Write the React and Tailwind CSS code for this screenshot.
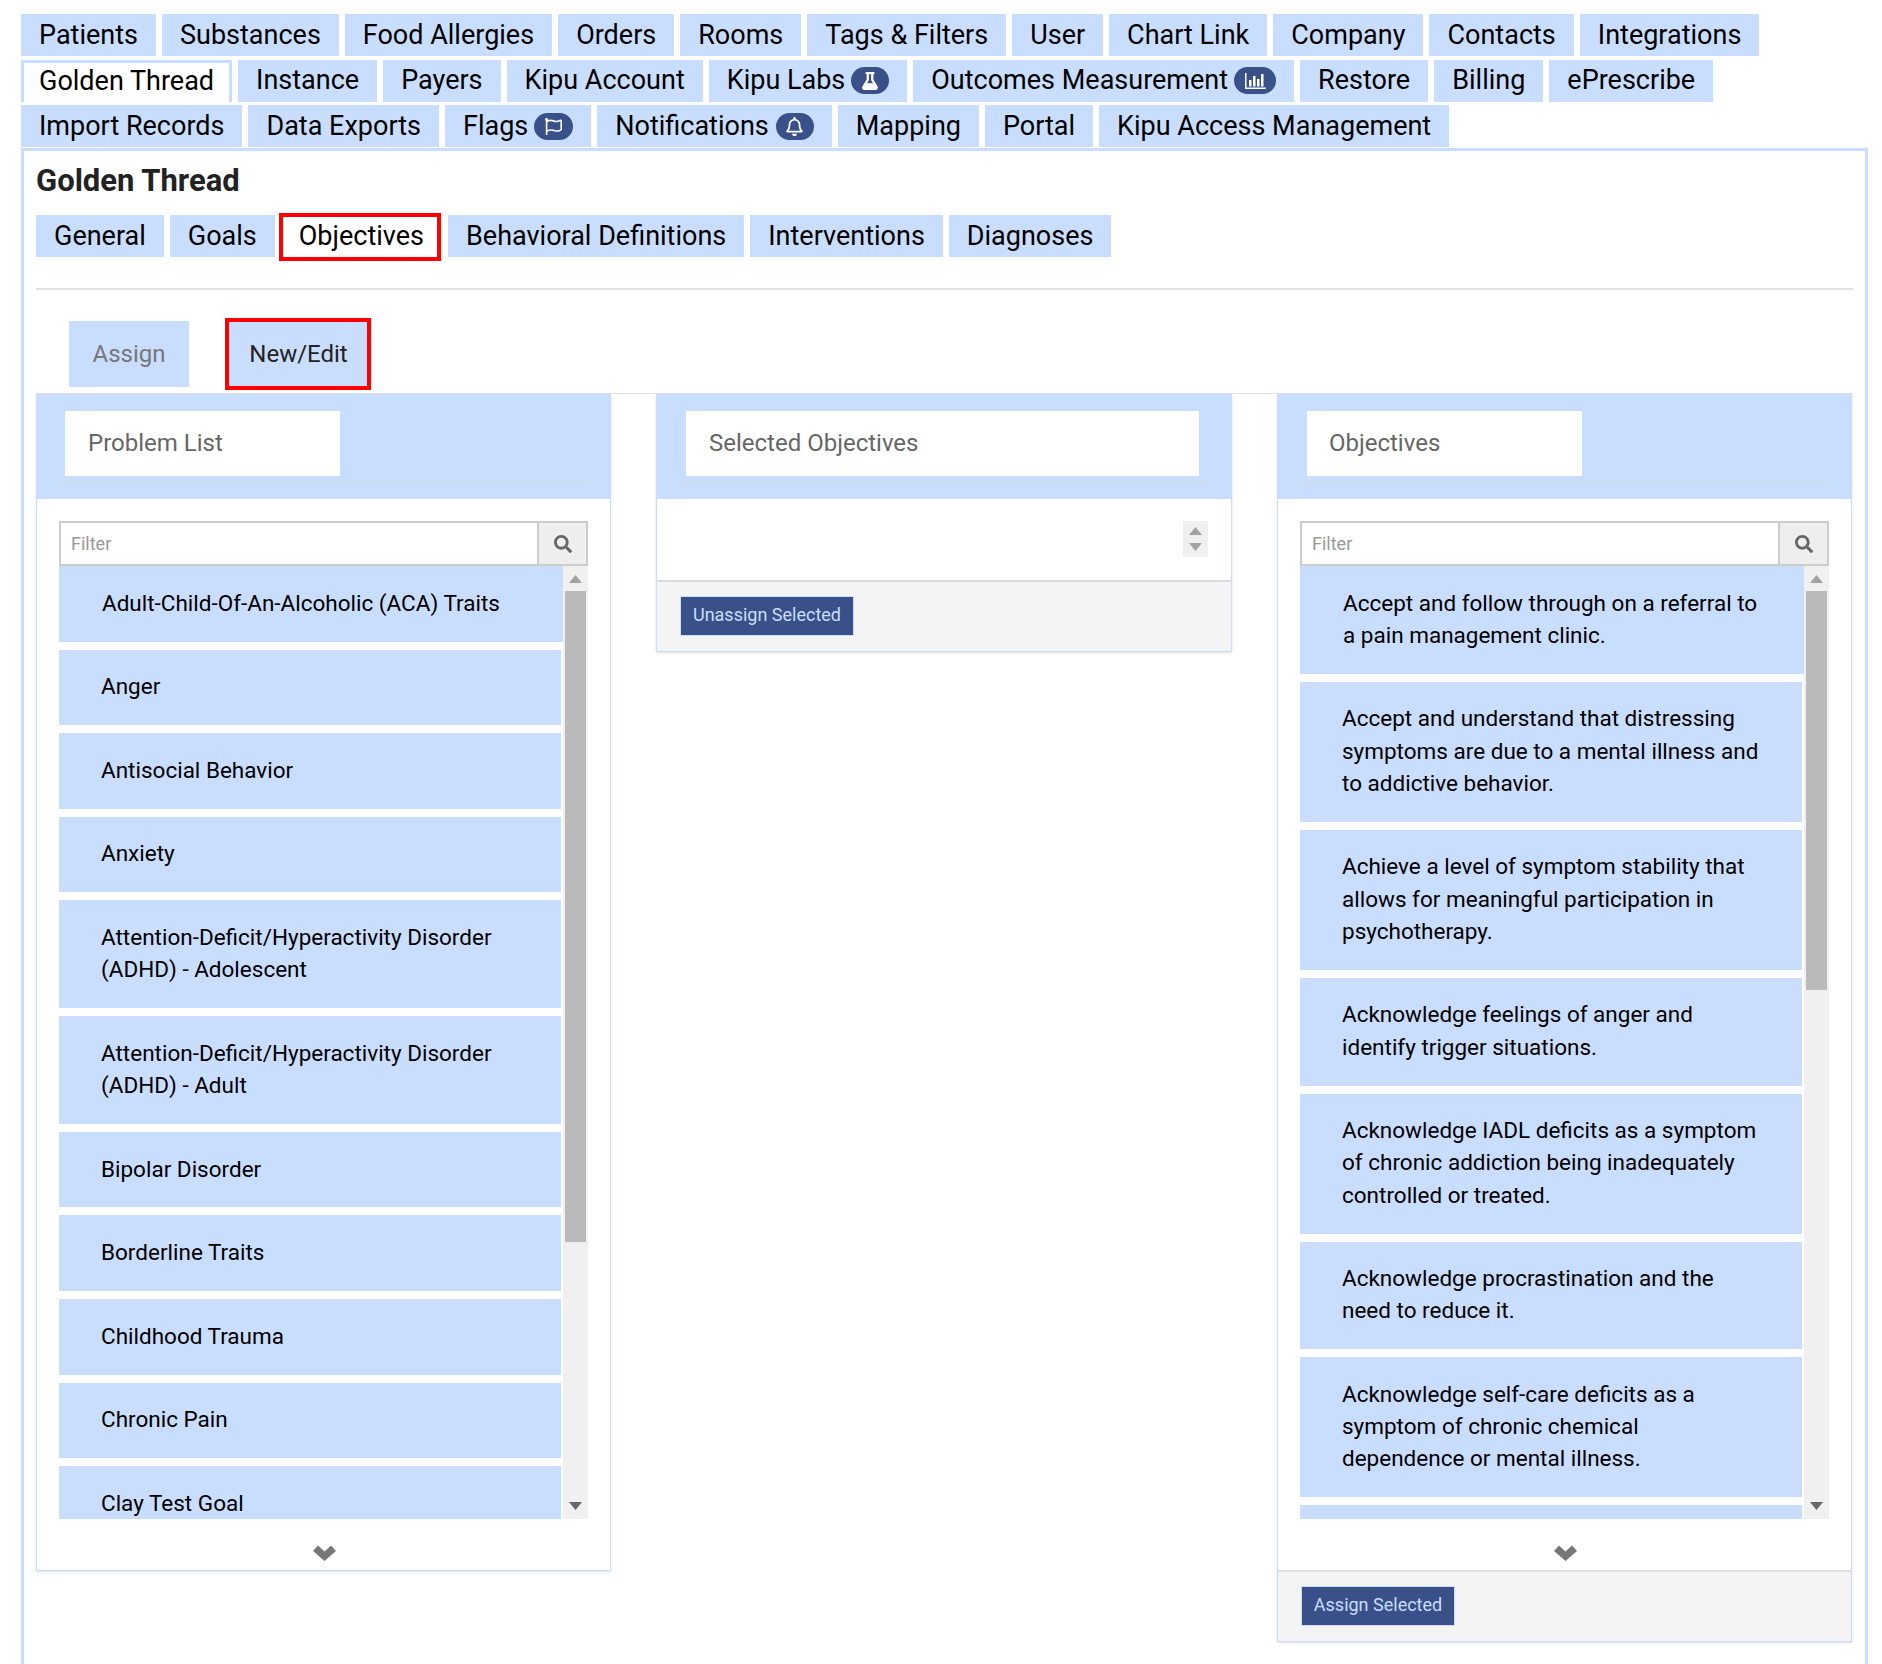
import { FaFlask, FaRegFlag, FaRegBell, FaSearch } from 'react-icons/fa';

function BarsIcon() {
  return (
    <svg width="21" height="16" viewBox="0 0 21 16" className="fill-white">
      <rect x="0" y="0" width="1.5" height="16" />
      <rect x="0" y="14.5" width="21" height="1.5" />
      <rect x="4" y="7" width="2.5" height="6.5" />
      <rect x="8" y="3" width="2.5" height="10.5" />
      <rect x="12" y="6" width="2.5" height="7.5" />
      <rect x="16" y="1" width="2.5" height="12.5" />
    </svg>
  );
}

const tabRows = [
  [
    { name: 'Patients' },
    { name: 'Substances' },
    { name: 'Food Allergies' },
    { name: 'Orders' },
    { name: 'Rooms' },
    { name: 'Tags & Filters' },
    { name: 'User' },
    { name: 'Chart Link' },
    { name: 'Company' },
    { name: 'Contacts' },
    { name: 'Integrations' },
  ],
  [
    { name: 'Golden Thread', active: true },
    { name: 'Instance' },
    { name: 'Payers' },
    { name: 'Kipu Account' },
    { name: 'Kipu Labs', icon: <FaFlask size={18} />, pill: 'ml-[6px] w-[38px]' },
    { name: 'Outcomes Measurement', icon: <BarsIcon />, pill: 'ml-[6px] w-[42px]' },
    { name: 'Restore' },
    { name: 'Billing' },
    { name: 'ePrescribe' },
  ],
  [
    { name: 'Import Records' },
    { name: 'Data Exports' },
    { name: 'Flags', icon: <FaRegFlag size={17} />, pill: 'ml-[6px] w-[39px]' },
    { name: 'Notifications', icon: <FaRegBell size={19} />, pill: 'ml-[7px] w-[38px]' },
    { name: 'Mapping' },
    { name: 'Portal' },
    { name: 'Kipu Access Management' },
  ],
];

const subTabs = ['General', 'Goals', 'Objectives', 'Behavioral Definitions', 'Interventions', 'Diagnoses'];

const problems = [
  'Adult-Child-Of-An-Alcoholic (ACA) Traits',
  'Anger',
  'Antisocial Behavior',
  'Anxiety',
  'Attention-Deficit/Hyperactivity Disorder (ADHD) - Adolescent',
  'Attention-Deficit/Hyperactivity Disorder (ADHD) - Adult',
  'Bipolar Disorder',
  'Borderline Traits',
  'Childhood Trauma',
  'Chronic Pain',
  'Clay Test Goal',
];

const objectives = [
  'Accept and follow through on a referral to a pain management clinic.',
  'Accept and understand that distressing symptoms are due to a mental illness and to addictive behavior.',
  'Achieve a level of symptom stability that allows for meaningful participation in psychotherapy.',
  'Acknowledge feelings of anger and identify trigger situations.',
  'Acknowledge IADL deficits as a symptom of chronic addiction being inadequately controlled or treated.',
  'Acknowledge procrastination and the need to reduce it.',
  'Acknowledge self-care deficits as a symptom of chronic chemical dependence or mental illness.',
];

function Arrow({ down, dark }) {
  return (
    <svg width="13" height="8" viewBox="0 0 13 8" className={dark ? 'fill-[#666]' : 'fill-[#a3a3a3]'}>
      <polygon points={down ? '0,0 13,0 6.5,8' : '6.5,0 13,8 0,8'} />
    </svg>
  );
}

function PanelHeader({ title, tile }) {
  return (
    <div className="bg-[#c9deff] h-[105px] px-[22px] pt-[17px]">
      <div className={`bg-white h-[65px] pb-[2px] flex items-center text-[24px] text-[#666] ${tile}`}>
        {title}
      </div>
      <div className="h-px bg-[#d6d9de] mt-[6px]" />
    </div>
  );
}

function FilterBox() {
  return (
    <div className="flex h-[45px] border-2 border-[#ccc]">
      <input
        placeholder="Filter"
        className="flex-1 min-w-0 pl-[10px] text-[18px] text-[#333] placeholder:text-[#999] outline-none"
      />
      <div className="w-[49px] bg-[#eee] border-l-2 border-[#ccc] flex items-center justify-center text-[#666]">
        <FaSearch size={18} />
      </div>
    </div>
  );
}

function ScrollList({ items, thumbHeight, textPad, spacer }) {
  return (
    <div className="flex h-[953px]">
      <div className="flex-1 min-w-0 overflow-hidden flex flex-col gap-[8px] items-start">
        {items.map((item, i) => (
          <div
            key={item}
            className={`bg-[#c9deff] shrink-0 pt-[20.7px] pb-[22.7px] text-[22.5px] leading-[32.2px] text-black ${
              i === 0 ? 'w-full pl-[43px]' : 'w-[calc(100%-2px)] pl-[42px]'
            } ${textPad}`}
          >
            {item}
          </div>
        ))}
        {spacer && <div className="bg-[#c9deff] shrink-0 w-[calc(100%-2px)] h-[76px]" />}
      </div>
      <div className="w-[25px] bg-[#f0f0f0] flex flex-col items-center">
        <div className="h-[25px] flex items-center">
          <Arrow />
        </div>
        <div className="w-[21px] bg-[#bababa]" style={{ height: thumbHeight }} />
        <div className="mt-auto mb-[9px]">
          <Arrow down dark />
        </div>
      </div>
    </div>
  );
}

function Footer({ label, width }) {
  return (
    <div className="bg-[#f4f4f4] border-t-2 border-[#ddd] h-[71px] pl-[23px] pt-[14px]">
      <button className={`bg-[#3a5088] border border-[#c9deff] h-[40px] pb-[3px] text-[18px] text-[#c9deff] ${width}`}>
        {label}
      </button>
    </div>
  );
}

function Chevron() {
  return (
    <div className="h-[51px] flex items-start justify-center pt-[26px] pl-[2px]">
      <svg width="23" height="16" viewBox="0 0 23 16" className="fill-[#777]">
        <polygon points="0,6 5,0.5 11.5,6.5 18,0.5 23,6 11.5,16" />
      </svg>
    </div>
  );
}

export default function App() {
  return (
    <div className="min-h-[1664px] bg-white font-['Roboto',sans-serif] pt-[14px] pl-[21px] pr-[14px]">
      <nav className="flex flex-col gap-[3.5px]">
        {tabRows.map((row, i) => (
          <div key={i} className="flex gap-[6px] h-[42px]">
            {row.map((tab) => (
              <a
                key={tab.name}
                className={`flex items-center text-[27px] text-black whitespace-nowrap ${
                  tab.active ? 'bg-white border-t-[3px] border-x-[3px] border-[#c9deff] px-[15px] pb-[1px]' : 'bg-[#c9deff] px-[18px]'
                }`}
              >
                {tab.name}
                {tab.icon && (
                  <span className={`h-[27px] rounded-full bg-[#3a5088] text-white flex items-center justify-center ${tab.pill}`}>
                    {tab.icon}
                  </span>
                )}
              </a>
            ))}
          </div>
        ))}
      </nav>

      <main className="mt-[1px] border-[3px] border-b-0 border-[#c9deff] min-h-[1516px] px-[12px]">
        <h2 className="pt-[12px] h-[64px] text-[31px] leading-[36px] font-bold text-[#222]">Golden Thread</h2>

        <div className="flex gap-[6px] h-[42px]">
          {subTabs.map((tab) => (
            <a
              key={tab}
              className={`flex items-center text-[27px] text-black whitespace-nowrap ${
                tab === 'Objectives'
                  ? 'bg-white border-[4px] border-[#f00] h-[48px] -mt-[2px] -ml-[2px] mr-[1px] pl-[16px] pr-[13px] pb-[2px]'
                  : 'bg-[#c9deff] px-[18px]'
              }`}
            >
              {tab}
            </a>
          ))}
        </div>

        <hr className="mt-[31px] border-t-2 border-[#e2e2e2]" />

        <div className="flex items-end gap-[36px] pl-[33px] h-[104px] pb-[3px] border-b border-[#e2e2e2]">
          <a className="w-[120px] h-[66px] mb-[3px] flex items-center justify-center bg-[#c9deff] text-[24px] text-[#777]">Assign</a>
          <a className="w-[146px] h-[72px] pl-[1px] flex items-center justify-center bg-[#c9deff] border-[4px] border-[#f00] text-[24px] text-[#222]">New/Edit</a>
        </div>

        <div className="grid grid-cols-[575px_576px_575px] gap-[45px] items-start">
          <section className="border border-t-0 border-[#c9deff] shadow-sm">
            <PanelHeader title="Problem List" tile="ml-[6px] w-[275px] pl-[23px]" />
            <div className="px-[22px] pt-[22px]">
              <FilterBox />
              <ScrollList items={problems} thumbHeight={651} textPad="pr-[30px]" />
            </div>
            <Chevron />
          </section>

          <section className="border border-t-0 border-[#c9deff] shadow-sm">
            <PanelHeader title="Selected Objectives" tile="ml-[7px] mr-[10px] pl-[23px]" />
            <div className="h-[81px] pt-[22px] pr-[23px] flex justify-end">
              <div className="w-[25px] h-[36px] bg-[#f0f0f0] flex flex-col items-center justify-center gap-[8px]">
                <Arrow />
                <Arrow down />
              </div>
            </div>
            <Footer label="Unassign Selected" width="w-[174px]" />
          </section>

          <section className="border border-t-0 border-[#c9deff] shadow-sm">
            <PanelHeader title="Objectives" tile="ml-[7px] w-[275px] pl-[22px]" />
            <div className="px-[22px] pt-[22px]">
              <FilterBox />
              <ScrollList items={objectives} thumbHeight={399} textPad="pr-[36px]" spacer />
            </div>
            <Chevron />
            <Footer label="Assign Selected" width="w-[154px]" />
          </section>
        </div>
      </main>
    </div>
  );
}
